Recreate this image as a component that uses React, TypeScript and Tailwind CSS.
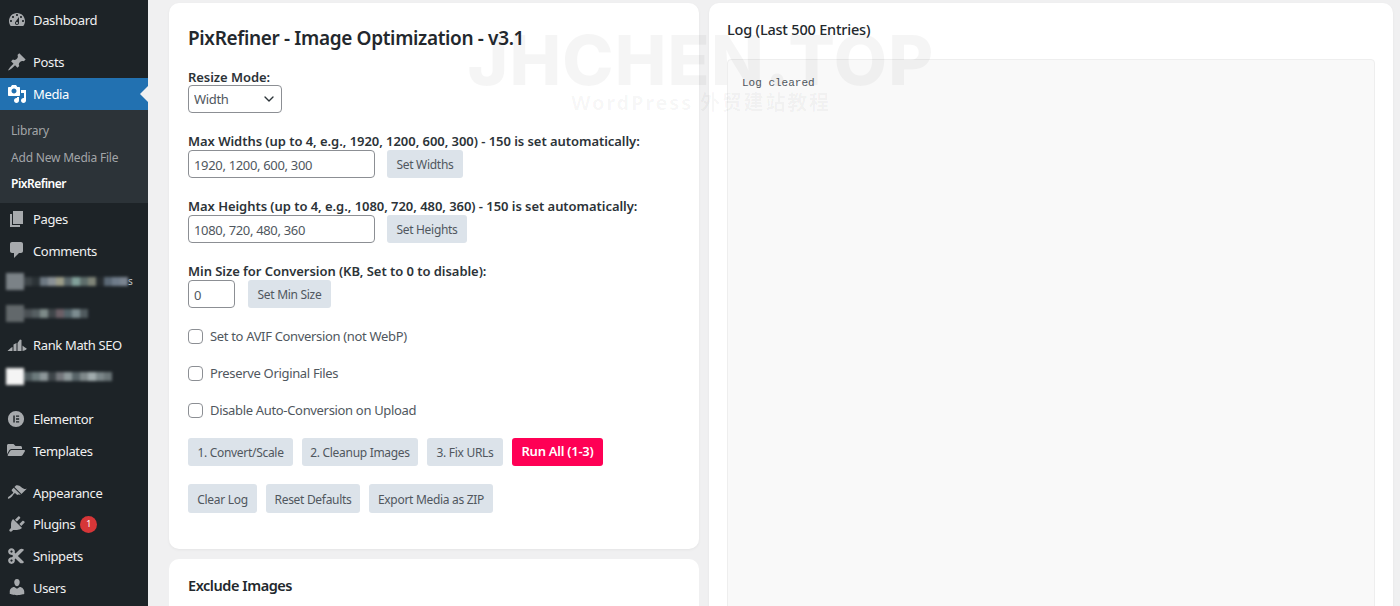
import { ChevronDown } from 'lucide-react';
import { FaCut, FaFolderOpen } from 'react-icons/fa';

const dashicons = {
  dashboard:
    'M3.76 16h12.48c1.1-1.37 1.76-3.11 1.76-5 0-4.42-3.58-8-8-8s-8 3.58-8 8c0 1.89.66 3.63 1.76 5zM10 4c.55 0 1 .45 1 1s-.45 1-1 1-1-.45-1-1 .45-1 1-1zM6 6c.55 0 1 .45 1 1s-.45 1-1 1-1-.45-1-1 .45-1 1-1zm8 0c.55 0 1 .45 1 1s-.45 1-1 1-1-.45-1-1 .45-1 1-1zm-5.37 5.55L12 7v6c0 1.1-.9 2-2 2s-2-.9-2-2c0-.57.24-1.08.63-1.45zM4 10c.55 0 1 .45 1 1s-.45 1-1 1-1-.45-1-1 .45-1 1-1zm12 0c.55 0 1 .45 1 1s-.45 1-1 1-1-.45-1-1 .45-1 1-1zm-5 3c0-.55-.45-1-1-1s-1 .45-1 1 .45 1 1 1 1-.45 1-1z',
  post: 'M10.44 3.02l1.82-1.82 6.36 6.35-1.83 1.82c-1.05-.68-2.48-.57-3.41.36l-.75.75c-.92.93-1.04 2.35-.35 3.41l-1.83 1.82-2.41-2.41-2.8 2.79c-.42.42-3.38 2.71-3.8 2.29s1.86-3.39 2.28-3.81l2.79-2.79L4.1 9.36l1.83-1.82c1.05.69 2.48.57 3.4-.36l.75-.75c.93-.92 1.05-2.35.36-3.41z',
  media:
    'M13 11V4c0-.55-.45-1-1-1h-1.67L9 1H5L3.67 3H2c-.55 0-1 .45-1 1v7c0 .55.45 1 1 1h10c.55 0 1-.45 1-1zM7 4.5c1.38 0 2.5 1.12 2.5 2.5S8.38 9.5 7 9.5 4.5 8.38 4.5 7 5.62 4.5 7 4.5zM14 6h5v10.5c0 1.38-1.12 2.5-2.5 2.5S14 17.88 14 16.5s1.12-2.5 2.5-2.5c.17 0 .34.02.5.05V9h-3V6zm-4 8.05V13h2v3.5c0 1.38-1.12 2.5-2.5 2.5S7 17.88 7 16.5 8.12 14 9.5 14c.17 0 .34.02.5.05z',
  page: 'M6 15V2h10v13H6zm-1 1h8v2H3V5h2v11z',
  comments: 'M5 2h9c1.1 0 2 .9 2 2v7c0 1.1-.9 2-2 2h-2l-5 5v-5H5c-1.1 0-2-.9-2-2V4c0-1.1.9-2 2-2z',
  appearance:
    'M14.48 11.06L7.41 3.99l1.5-1.5c.5-.56 2.3-.47 3.51.32 1.21.8 1.43 1.28 2.91 2.1 1.18.64 2.45 1.26 4.45.85zm-.71.71L6.7 4.7 4.93 6.47c-.39.39-.39 1.02 0 1.41l1.06 1.06c.39.39.39 1.03 0 1.42-.6.6-1.43 1.11-2.21 1.69-.35.26-.7.53-1.01.84C1.43 13.23.4 14.85 1.05 15.5c.65.65 2.27-.38 3.61-1.72.31-.31.58-.66.84-1.01.58-.78 1.09-1.61 1.69-2.21.39-.39 1.02-.39 1.41 0l1.06 1.06c.39.39 1.02.39 1.41 0z',
  plugins:
    'M13.11 4.36L9.87 7.6 8 5.73l3.24-3.24c.35-.34 1.05-.2 1.56.32.52.51.66 1.21.31 1.55zm-8 1.77l.91-1.12 9.01 9.01-1.19.84c-.71.71-2.63 1.16-3.82 1.16H6.14L4.9 17.26c-.59.59-1.54.59-2.12 0-.59-.58-.59-1.53 0-2.12l1.24-1.24v-3.88c0-1.13.4-3.19 1.09-3.89zm7.26 3.97l3.24-3.24c.34-.35 1.04-.21 1.55.31.52.51.66 1.21.31 1.55l-3.24 3.25z',
  users:
    'M10 9.25c-2.27 0-2.73-3.44-2.73-3.44C7 4.02 7.82 2 9.97 2c2.16 0 2.98 2.02 2.71 3.81 0 0-.41 3.44-2.68 3.44zm0 2.57L12.72 10c2.39 0 4.52 2.33 4.52 4.53v2.49s-3.65 1.13-7.24 1.13c-3.65 0-7.24-1.13-7.24-1.13v-2.49c0-2.25 1.94-4.48 4.47-4.48z',
};

function Dashicon({ d }: { d: string }) {
  return (
    <svg viewBox="0 0 20 20" className="w-[20px] h-[20px]" fill="currentColor">
      <path d={d} />
    </svg>
  );
}

function ElementorIcon() {
  return (
    <svg viewBox="0 0 20 20" className="w-[18px] h-[18px]" fill="currentColor">
      <path
        fillRule="evenodd"
        d="M10 1a9 9 0 1 0 0 18 9 9 0 0 0 0-18zM7 6h1.6v8H7V6zm3 0h3.5v1.6H10V6zm0 3.2h3.5v1.6H10V9.2zm0 3.2h3.5V14H10v-1.6z"
      />
    </svg>
  );
}

function RankMathIcon() {
  return (
    <svg viewBox="0 0 20 20" className="w-[20px] h-[20px]" fill="currentColor">
      <path d="M0.500 15.500c1.500-.5 2.500-1.500 3.500-2.700l1.500-.8v4H1.500zM6.500 9.500l3-1.500v8h-3zM10.500 8l2.500-3.500 1.500.5v11h-4zM15.500 10.500c1 1 2.500 2.200 4 2.700v1c-1.500 1-2.700 1.500-4 1.800z" />
    </svg>
  );
}

function MenuRow({
  icon,
  label,
  children,
}: {
  icon: React.ReactNode;
  label: string;
  children?: React.ReactNode;
}) {
  return (
    <div className="h-[31.6px] flex items-center text-[#f0f0f1]">
      <div className="w-[33px] pl-[7px] flex items-center text-[#a7aaad]">{icon}</div>
      <span className="text-[13px] leading-[20px] pt-[0.5px] tracking-[-0.35px]">{label}</span>
      {children}
    </div>
  );
}

// pixelated plugin names that were censored in the picture
function BlurredRow({ cells, trailing }: { cells: string[]; trailing?: string }) {
  return (
    <div className="h-[31.6px] flex items-center pl-[6px]">
      <div className="flex items-center blur-[1.5px]">
        {cells.map((c, i) => (
          <div
            key={i}
            className={i === 0 ? 'w-[18px] h-[17px]' : 'w-[8px] h-[9px]'}
            style={{ backgroundColor: c }}
          />
        ))}
      </div>
      {trailing ? <span className="text-[10px] text-[#c3c4c7]">{trailing}</span> : null}
    </div>
  );
}

function Sidebar() {
  return (
    <aside className="w-[148px] shrink-0 h-[606px] bg-[#1d2327] overflow-hidden pt-[4px]">
      <div className="h-[32px] flex items-center text-[#f0f0f1]">
        <div className="w-[33px] pl-[7px] text-[#a7aaad]">
          <Dashicon d={dashicons.dashboard} />
        </div>
        <span className="text-[13px] leading-[20px] tracking-[-0.35px]">Dashboard</span>
      </div>
      <div className="h-[32px] mt-[10px] flex items-center text-[#f0f0f1]">
        <div className="w-[33px] pl-[7px] text-[#a7aaad]">
          <Dashicon d={dashicons.post} />
        </div>
        <span className="text-[13px] leading-[20px] tracking-[-0.35px]">Posts</span>
      </div>
      <div className="relative h-[32px] bg-[#2271b1] flex items-center text-white">
        <div className="w-[33px] pl-[7px]">
          <Dashicon d={dashicons.media} />
        </div>
        <span className="text-[13px] leading-[20px] tracking-[-0.35px]">Media</span>
        <div className="absolute right-0 top-[8px] w-0 h-0 border-y-[8px] border-y-transparent border-r-[8px] border-r-[#f0f0f1]" />
      </div>
      <div className="h-[93px] bg-[#2c3338] pl-[11px] pt-[8px] text-[12px] tracking-[-0.2px] text-[#c3c4c7]/80 flex flex-col">
        <div className="h-[26px] flex items-center">Library</div>
        <div className="h-[27px] flex items-center">Add New Media File</div>
        <div className="h-[26px] flex items-center text-white font-semibold tracking-[-0.5px]">PixRefiner</div>
      </div>
      <MenuRow icon={<Dashicon d={dashicons.page} />} label="Pages" />
      <MenuRow icon={<Dashicon d={dashicons.comments} />} label="Comments" />
      <BlurredRow
        trailing="s"
        cells={['#7b8287', '#3c4347', '#2b3236', '#6d7882', '#8a9196', '#9b9c88', '#59666a', '#81a09a', '#5e6d6b', '#7f8478', '#262c30', '#5b6875', '#6f7c8a', '#7a8490']}
      />
      <BlurredRow
        cells={['#62686b', '#4a5054', '#565f62', '#7d8a88', '#3f4549', '#6b5f66', '#54646a', '#7c8c90', '#505a5e']}
      />
      <MenuRow icon={<RankMathIcon />} label="Rank Math SEO" />
      <BlurredRow
        cells={['#f4f4f4', '#4f5a5e', '#6c7a7c', '#8d9699', '#3e4549', '#74777c', '#8f9a9c', '#586468', '#7f888a', '#a1abad', '#7b8689', '#6a7477']}
      />
      <div className="h-[10.4px]" />
      <MenuRow icon={<ElementorIcon />} label="Elementor" />
      <MenuRow icon={<FaFolderOpen className="w-[18px] h-[18px]" />} label="Templates" />
      <div className="h-[10.6px]" />
      <MenuRow icon={<Dashicon d={dashicons.appearance} />} label="Appearance" />
      <MenuRow icon={<Dashicon d={dashicons.plugins} />} label="Plugins">
        <span className="ml-[5px] w-[17px] h-[17px] rounded-full bg-[#d63638] text-white text-[9px] flex items-center justify-center">
          1
        </span>
      </MenuRow>
      <MenuRow icon={<FaCut className="w-[18px] h-[18px]" />} label="Snippets" />
      <MenuRow icon={<Dashicon d={dashicons.users} />} label="Users" />
    </aside>
  );
}

function Label({ children }: { children: React.ReactNode }) {
  return <div className="text-[13px] leading-[18px] font-semibold tracking-[-0.05px] text-[#2c3338]">{children}</div>;
}

function Btn({ children, className = '' }: { children: React.ReactNode; className?: string }) {
  return (
    <button className={`h-[28px] pt-[2px] rounded-[3px] bg-[#dce3ea] text-[#50575e] text-[12px] tracking-[-0.3px] flex items-center justify-center ${className}`}>
      {children}
    </button>
  );
}

function TextInput({ value, className }: { value: string; className: string }) {
  return (
    <input
      readOnly
      value={value}
      className={`h-[28px] border border-[#8c8f94] rounded-[4px] bg-white pl-[5px] pr-[5px] pt-[2px] text-[13px] tracking-[-0.33px] text-[#50575e] outline-none ${className}`}
    />
  );
}

function CheckRow({ label }: { label: string }) {
  return (
    <label className="h-[37px] flex items-center gap-[7px] text-[13px] tracking-[-0.33px] text-[#50575e]">
      <input type="checkbox" className="appearance-none w-[15px] h-[15px] bg-white border border-[#8c8f94] rounded-[4px]" />
      {label}
    </label>
  );
}

function SettingsCard() {
  return (
    <section className="h-[546px] shrink-0 bg-white rounded-[10px] shadow-[0_1px_3px_rgba(0,0,0,0.05)] px-[19px] pt-[23px]">
      <h1 className="text-[19px] leading-[24px] font-semibold tracking-[-0.35px] text-[#23282d]">
        PixRefiner - Image Optimization - v3.1
      </h1>
      <div className="mt-[18px]">
        <Label>Resize Mode:</Label>
        <div className="relative w-[94px] mt-[-1px]">
          <select className="appearance-none w-[94px] h-[28px] border border-[#8c8f94] rounded-[4px] bg-white pl-[5px] pr-[5px] pt-[2px] text-[13px] tracking-[-0.33px] text-[#50575e] outline-none">
            <option>Width</option>
          </select>
          <ChevronDown className="absolute right-[5px] top-[6px] w-[16px] h-[16px] text-[#2c3338] pointer-events-none" />
        </div>
      </div>
      <div className="mt-[19px]">
        <Label>Max Widths (up to 4, e.g., 1920, 1200, 600, 300) - 150 is set automatically:</Label>
        <div className="flex gap-[12px]">
          <TextInput value="1920, 1200, 600, 300" className="w-[187px]" />
          <Btn className="w-[76px]">Set Widths</Btn>
        </div>
      </div>
      <div className="mt-[19px]">
        <Label>Max Heights (up to 4, e.g., 1080, 720, 480, 360) - 150 is set automatically:</Label>
        <div className="flex gap-[12px]">
          <TextInput value="1080, 720, 480, 360" className="w-[187px]" />
          <Btn className="w-[80px]">Set Heights</Btn>
        </div>
      </div>
      <div className="mt-[19px]">
        <Label>Min Size for Conversion (KB, Set to 0 to disable):</Label>
        <div className="flex gap-[13px]">
          <TextInput value="0" className="w-[47px]" />
          <Btn className="w-[83px]">Set Min Size</Btn>
        </div>
      </div>
      <div className="mt-[10px]">
        <CheckRow label="Set to AVIF Conversion (not WebP)" />
        <CheckRow label="Preserve Original Files" />
        <CheckRow label="Disable Auto-Conversion on Upload" />
      </div>
      <div className="mt-[9px] flex gap-[9px]">
        <Btn className="w-[105px]">1. Convert/Scale</Btn>
        <Btn className="w-[116px]">2. Cleanup Images</Btn>
        <Btn className="w-[76px]">3. Fix URLs</Btn>
        <button className="w-[91px] h-[28px] rounded-[3px] bg-[#ff0055] text-white text-[13px] font-semibold tracking-[-0.25px]">
          Run All (1-3)
        </button>
      </div>
      <div className="mt-[18px] flex gap-[9px]">
        <Btn className="w-[69px] h-[29px]">Clear Log</Btn>
        <Btn className="w-[94px] h-[29px]">Reset Defaults</Btn>
        <Btn className="w-[124px] h-[29px]">Export Media as ZIP</Btn>
      </div>
    </section>
  );
}

function Watermark() {
  return (
    <div className="absolute left-[467px] top-[24px] w-[468px] pointer-events-none flex flex-col items-center text-black/[0.04]">
      <div className="text-[69px] leading-[72px] font-extrabold tracking-[1.2px] whitespace-nowrap font-['Inter',sans-serif]">JHCHEN.TOP</div>
      <div className="text-[20px] leading-[24px] mt-[-5px] font-bold tracking-[1.8px] whitespace-nowrap">WordPress 外贸建站教程</div>
    </div>
  );
}

export default function App() {
  return (
    <div className="relative w-[1400px] h-[606px] overflow-hidden flex bg-[#f0f0f1] font-['Noto_Sans','Noto_Sans_CJK_SC',sans-serif]">
      <Sidebar />
      <main className="flex gap-[10px] pl-[21px] pt-[3px]">
        <div className="w-[530px] flex flex-col gap-[10px]">
          <SettingsCard />
          <section className="h-[100px] shrink-0 bg-white rounded-[10px] px-[19px] pt-[16px]">
            <h2 className="text-[14.5px] leading-[20px] font-semibold tracking-[-0.45px] text-[#23282d]">Exclude Images</h2>
          </section>
        </div>
        <section className="w-[684px] h-[700px] shrink-0 bg-white rounded-[10px] shadow-[0_1px_3px_rgba(0,0,0,0.05)] px-[18px] pt-[16px]">
          <h2 className="text-[14.5px] leading-[20px] font-medium tracking-[-0.2px] text-[#23282d]">Log (Last 500 Entries)</h2>
          <div className="mt-[20px] h-[600px] bg-[#f9f9f9] border border-[#eeeeee] rounded-[4px] pl-[14px] pt-[16px] font-['Liberation_Mono',monospace] text-[11px] leading-[14px] text-[#50575e]">
            Log cleared
          </div>
        </section>
      </main>
      <Watermark />
    </div>
  );
}
